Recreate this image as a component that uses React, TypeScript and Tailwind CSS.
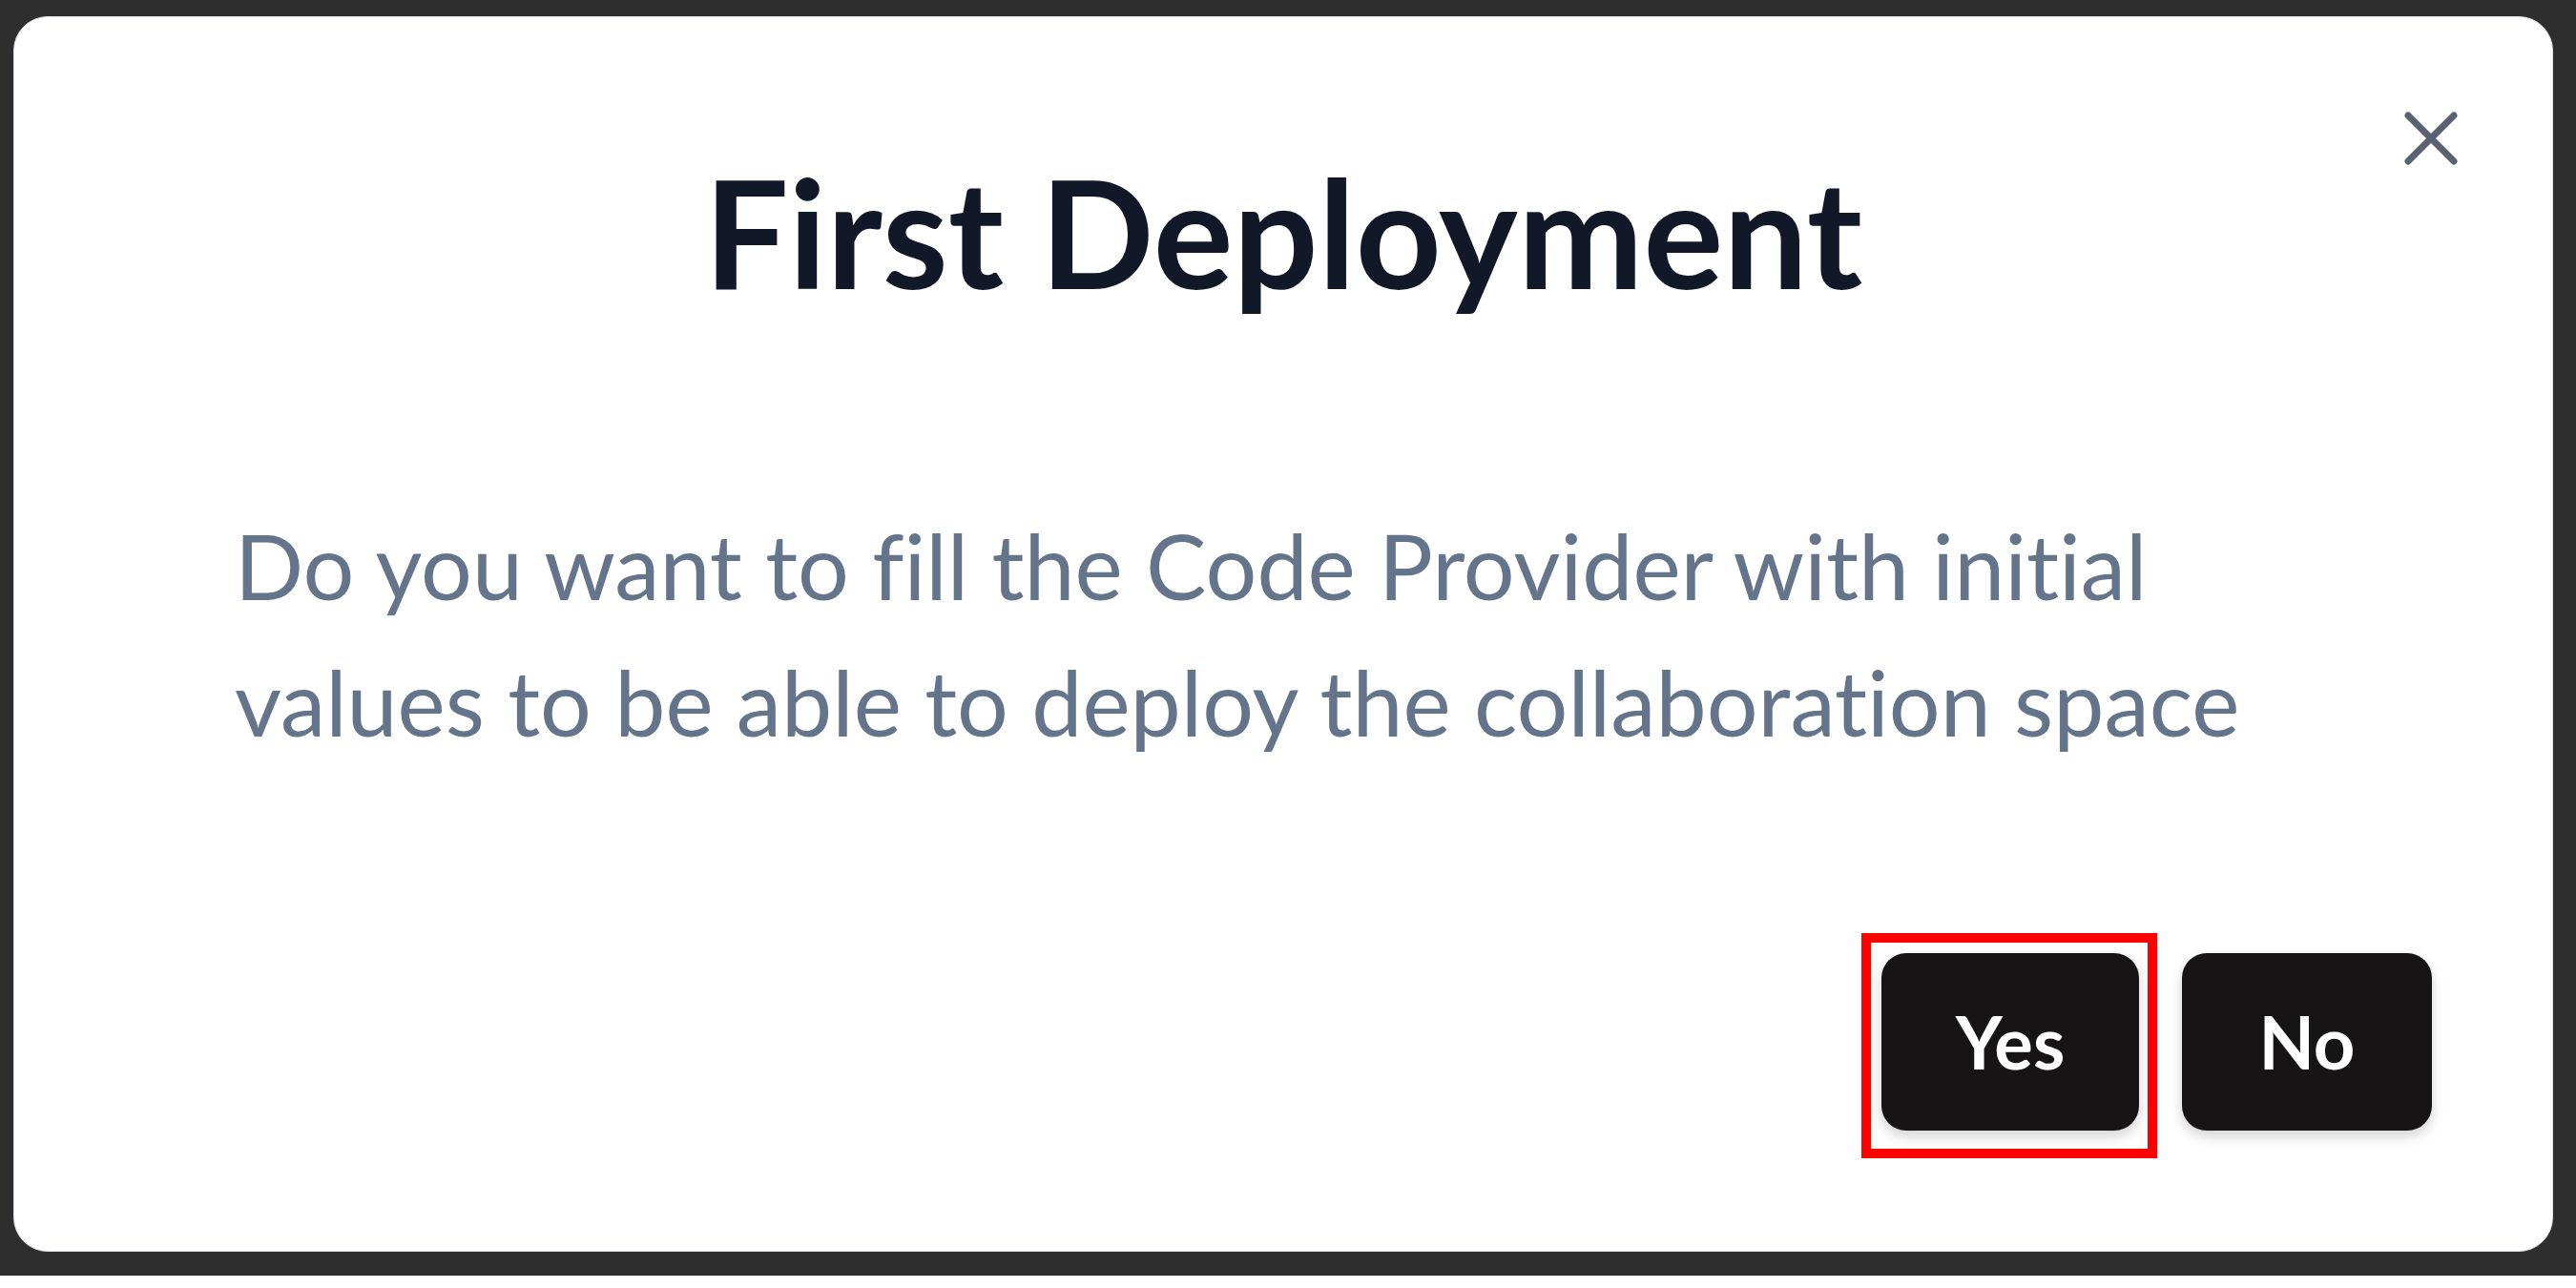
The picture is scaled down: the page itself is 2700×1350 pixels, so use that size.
import { X } from "lucide-react";

function ActionButton({ label, marked = false }: { label: string; marked?: boolean }) {
  return (
    <div className="relative">
      <button
        className={`h-[186px] rounded-[26px] bg-[#161415] text-[76px] font-bold leading-none text-white shadow-[0_6px_14px_rgba(0,0,0,0.18)] ${
          marked ? "w-[270px]" : "w-[262px]"
        }`}
      >
        {label}
      </button>
      {marked && (
        <div className="pointer-events-none absolute -left-[21px] -right-[19px] -top-[21px] -bottom-[29px] border-[10px] border-[#ff0000]" />
      )}
    </div>
  );
}

export default function App() {
  return (
    <div className="h-[1350px] w-[2700px] bg-white font-['Lato','Noto_Sans',sans-serif] [font-variant-ligatures:none]">
      <div className="flex h-[1337px] bg-[#2e2e2e] pl-[14px] pt-[17px]">
        <div className="relative flex h-[1295px] w-[2662px] flex-col rounded-[36px] border border-[#dbe0e8] bg-white">
          <button className="absolute right-[79px] top-[79px] text-[#5a6170]">
            <X size={96} strokeWidth={1.75} />
          </button>

          <h1 className="mt-[146px] text-center text-[157px] font-bold leading-none text-[#111827]">
            First Deployment
          </h1>

          <p className="mt-[200px] pl-[231px] text-[95px] leading-[143px] text-[#64748b]">
            Do you want to fill the Code Provider with initial
            <br />
            values to be able to deploy the collaboration space
          </p>

          <div className="mt-[192px] flex justify-end gap-[45px] pr-[126px]">
            <ActionButton label="Yes" marked />
            <ActionButton label="No" />
          </div>
        </div>
      </div>
    </div>
  );
}
